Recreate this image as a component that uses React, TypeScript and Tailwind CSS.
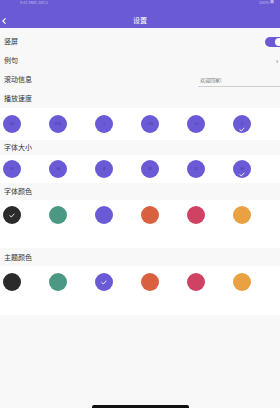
const speeds = ['0.5', '0.75', '1', '1.25', '1.5', '2']
const sizes = ['14', '16', '18', '20', '22', '24']
const colors = ['#2b2b2b', '#4b9985', '#6a5ad6', '#d9613f', '#cf4264', '#e9a142']

function Check({ className = '' }: { className?: string }) {
  return (
    <svg width="6" height="5" viewBox="0 0 6 5" fill="none" className={className}>
      <path d="M0.8 2.6L2.3 4L5.2 1" stroke="white" strokeWidth="0.9" strokeLinecap="round" strokeLinejoin="round" />
    </svg>
  )
}

function SectionTitle({ label, h }: { label: string; h: string }) {
  return (
    <div className={`flex items-center pl-[4px] text-[7px] text-[#333] ${h}`}>{label}</div>
  )
}

function LabelCircles({ items, checked }: { items: string[]; checked: number }) {
  return (
    <div className="flex items-center gap-[28px] pl-[3px]">
      {items.map((it, i) => (
        <div
          key={it}
          className="relative flex h-[18px] w-[18px] items-center justify-center rounded-full bg-[#6a5ad6] text-[3px] text-[#3f3290]"
        >
          {it}
          {i === checked && <Check className="absolute bottom-[1px]" />}
        </div>
      ))}
    </div>
  )
}

function ColorCircles({ checked }: { checked: number }) {
  return (
    <div className="flex items-center gap-[28px] pl-[3px]">
      {colors.map((c, i) => (
        <div
          key={c}
          className="flex h-[18px] w-[18px] items-center justify-center rounded-full"
          style={{ backgroundColor: c }}
        >
          {i === checked && <Check />}
        </div>
      ))}
    </div>
  )
}

export default function App() {
  return (
    <div
      className="relative flex h-[408px] w-[280px] flex-col overflow-hidden bg-[#f8f8f8]"
      style={{ fontFamily: '"Noto Sans CJK SC", "Noto Sans", sans-serif' }}
    >
      {/* header */}
      <div className="relative h-[28px] bg-[#6a5bd4] text-white">
        <div className="absolute left-[20px] top-0 text-[4px] leading-none opacity-50">9:41 Mon Jun 3</div>
        <div className="absolute right-[6px] top-0 text-[4px] leading-none opacity-50">100% ■</div>
        <svg className="absolute left-[2px] top-[18px]" width="4" height="6" viewBox="0 0 4 6" fill="none">
          <path d="M3.2 0.6L0.9 3L3.2 5.4" stroke="white" strokeWidth="1.1" strokeLinecap="round" strokeLinejoin="round" />
        </svg>
        <div className="absolute left-0 right-0 top-[17px] text-center text-[7px] leading-none">设置</div>
      </div>

      <div className="pt-[4px]">
        <div className="flex h-[19px] items-center justify-between pl-[4px] text-[7px] text-[#333]">
          <span>竖屏</span>
          <div className="mr-[-4px] flex h-[10px] w-[19px] items-center justify-end rounded-full bg-[#6a5ad6] pr-[1px]">
            <div className="h-[8px] w-[8px] rounded-full bg-white" />
          </div>
        </div>
        <div className="flex h-[19px] items-center justify-between pl-[4px] pr-[2px] text-[7px] text-[#333]">
          <span>例句</span>
          <span className="text-[7px] text-[#555]">›</span>
        </div>
        <div className="flex h-[19px] items-center justify-between pl-[4px] text-[7px] text-[#333]">
          <span>滚动信息</span>
          <div className="mt-[4px] w-[82px] border-b border-[#cfcfcf] pb-[3px] pl-[2px] text-[5px] text-[#777]">
            欢迎回家!
          </div>
        </div>
        <SectionTitle label="播放速度" h="h-[19px]" />
      </div>

      <div className="flex h-[32px] items-center bg-white">
        <LabelCircles items={speeds} checked={5} />
      </div>
      <SectionTitle label="字体大小" h="h-[15px]" />
      <div className="flex h-[28px] items-center bg-white">
        <LabelCircles items={sizes} checked={5} />
      </div>
      <SectionTitle label="字体颜色" h="h-[17px]" />
      <div className="h-[48px] bg-white pt-[6px]">
        <ColorCircles checked={0} />
      </div>
      <SectionTitle label="主题颜色" h="h-[18px]" />
      <div className="h-[49px] bg-white pt-[7px]">
        <ColorCircles checked={2} />
      </div>

      <div className="flex-1" />
      <div className="mx-auto h-[3px] w-[97px] rounded-t-[2px] bg-[#111]" />
    </div>
  )
}
